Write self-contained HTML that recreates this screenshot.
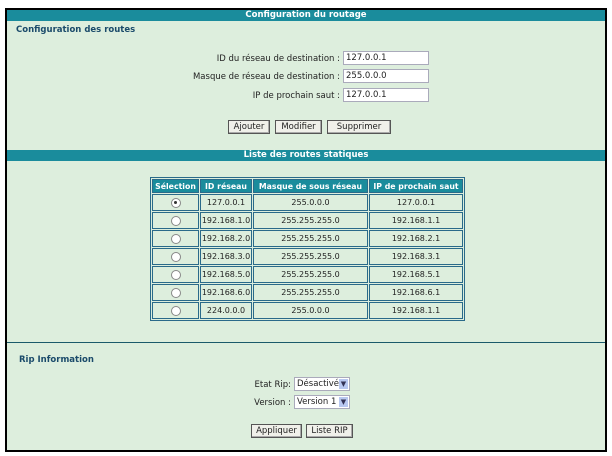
<!DOCTYPE html><html><head><style>
body{margin:0;width:612px;height:456px;background:#fff;font-family:"DejaVu Sans","Liberation Sans",sans-serif;font-size:8.5px;color:#222;position:relative;overflow:hidden}
.box{position:absolute;left:5px;top:8px;width:598px;height:440px;border:2px solid #000;background:#ddeedd}
.bar{position:absolute;left:0;width:598px;height:11px;background:#1a8c9c;color:#fff;text-align:center;font-size:8.5px;line-height:11px;font-weight:bold}
.ab{position:absolute}
.lbl{position:absolute;text-align:right;width:220px;left:113px}
.inp{position:absolute;left:336px;width:82px;height:12px;background:#fff;border:1px solid #aab;font-size:8.5px;line-height:12px;padding-left:2px;box-sizing:content-box}
.btn{position:absolute;height:12px;border:1px solid #555;background:#f0f0ea;font-size:8.5px;line-height:12px;text-align:center;box-shadow:inset -1px -1px 0 #aaa}
h4{position:absolute;margin:0;font-size:8.5px;color:#1a4a6a;font-weight:bold}
table{position:absolute;left:143px;top:167px;border-collapse:separate;border-spacing:1px;border:1px solid #2a6a8a;background:#ddeedd;table-layout:fixed}
td,th{border:1px solid #2a6a8a;height:15px;padding:0;text-align:center;font-size:8px;overflow:hidden;white-space:nowrap}
th{background:#1a8c9c;color:#fff;font-weight:bold;height:12px;font-size:7.8px}
.r{display:inline-block;width:8px;height:8px;border:1px solid #888;border-radius:50%;background:#fff;vertical-align:middle;position:relative}
.r.s:after{content:"";position:absolute;left:2.5px;top:2.5px;width:3px;height:3px;border-radius:50%;background:#333}
.sel{position:absolute;height:12px;background:#fff;border:1px solid #aab;font-size:8.5px;line-height:12px;padding-left:2px}
.sel i{position:absolute;right:1px;top:1px;width:9px;height:10px;background:#b8c8f0;color:#335;font-style:normal;font-size:7px;line-height:10px;text-align:center}
</style></head><body>
<div class="box">
<div class="bar" style="top:0">Configuration du routage</div>
<h4 style="left:9px;top:15px">Configuration des routes</h4>
<div class="lbl" style="top:44px">ID du réseau de destination :</div><div class="inp" style="top:41px">127.0.0.1</div>
<div class="lbl" style="top:62px">Masque de réseau de destination :</div><div class="inp" style="top:59px">255.0.0.0</div>
<div class="lbl" style="top:81px">IP de prochain saut :</div><div class="inp" style="top:78px">127.0.0.1</div>
<div class="btn" style="left:221px;top:110px;width:40px">Ajouter</div>
<div class="btn" style="left:268px;top:110px;width:45px">Modifier</div>
<div class="btn" style="left:320px;top:110px;width:62px">Supprimer</div>
<div class="bar" style="top:140px">Liste des routes statiques</div>
<table>
<tr><th style="width:45px">Sélection</th><th style="width:50px">ID réseau</th><th style="width:113px">Masque de sous réseau</th><th style="width:92px">IP de prochain saut</th></tr>
<tr><td><span class="r s"></span></td><td>127.0.0.1</td><td>255.0.0.0</td><td>127.0.0.1</td></tr>
<tr><td><span class="r"></span></td><td>192.168.1.0</td><td>255.255.255.0</td><td>192.168.1.1</td></tr>
<tr><td><span class="r"></span></td><td>192.168.2.0</td><td>255.255.255.0</td><td>192.168.2.1</td></tr>
<tr><td><span class="r"></span></td><td>192.168.3.0</td><td>255.255.255.0</td><td>192.168.3.1</td></tr>
<tr><td><span class="r"></span></td><td>192.168.5.0</td><td>255.255.255.0</td><td>192.168.5.1</td></tr>
<tr><td><span class="r"></span></td><td>192.168.6.0</td><td>255.255.255.0</td><td>192.168.6.1</td></tr>
<tr><td><span class="r"></span></td><td>224.0.0.0</td><td>255.0.0.0</td><td>192.168.1.1</td></tr>
</table>
<div class="ab" style="left:0;top:332px;width:598px;height:1px;background:#1a5a6a"></div>
<h4 style="left:12px;top:345px">Rip Information</h4>
<div class="lbl" style="top:370px;left:64px">Etat Rip:</div><div class="sel" style="left:287px;top:367px;width:52px">Désactivé<i>▼</i></div>
<div class="lbl" style="top:388px;left:64px">Version :</div><div class="sel" style="left:287px;top:385px;width:52px">Version 1<i>▼</i></div>
<div class="btn" style="left:244px;top:414px;width:49px">Appliquer</div>
<div class="btn" style="left:299px;top:414px;width:45px">Liste RIP</div>
</div>
</body></html>
